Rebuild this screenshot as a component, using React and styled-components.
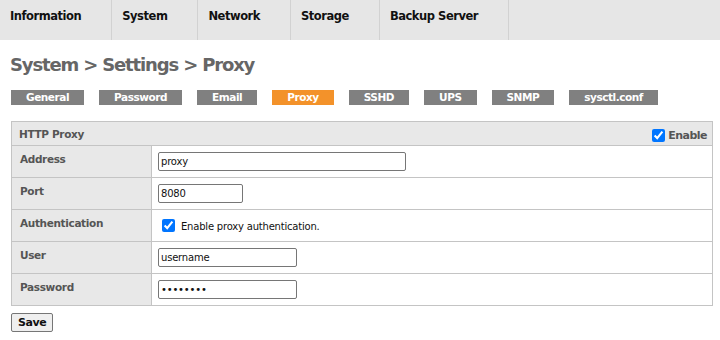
import React from 'react';
import styled, { createGlobalStyle } from 'styled-components';

const GlobalStyle = createGlobalStyle`
    body {
        margin: 0;
        background: #fff;
        font-family: "DejaVu Sans", Verdana, sans-serif;
        font-size: 12px;
    }
`;

const NavBar = styled.div`
    display: flex;
    height: 40px;
    background: #e6e6e6;
`;

const NavItem = styled.div`
    padding: 9px 30px 0 10px;
    border-right: 1px solid #d2d2d2;
    font-weight: bold;
    font-size: 11.5px;
    letter-spacing: -0.46px;
    color: #111;
`;

const Content = styled.div`
    padding: 0 7px 0 11px;
`;

const Title = styled.h1`
    margin: 14px 0 15px -1px;
    font-size: 18px;
    letter-spacing: -1.15px;
    color: #666;
    font-weight: bold;
`;

const TabRow = styled.div`
    display: flex;
    gap: 15px;
    margin-bottom: 16px;
`;

const Tab = styled.div`
    height: 15px;
    line-height: 15px;
    padding: 0 15px;
    background: ${p => (p.active ? '#f3922a' : '#808080')};
    color: #fff;
    font-weight: bold;
    font-size: 10.5px;
    letter-spacing: -0.45px;
`;

const Panel = styled.div`
    display: grid;
    grid-template-columns: 140px 1fr;
    border: 1px solid #c4c4c4;
    border-bottom: none;
`;

const PanelHead = styled.div`
    grid-column: 1 / -1;
    display: flex;
    justify-content: space-between;
    align-items: center;
    height: 23px;
    padding: 0 5px 0 7px;
    background: #e8e8e8;
    border-bottom: 1px solid #c4c4c4;
    font-weight: bold;
    font-size: 10.5px;
    letter-spacing: -0.35px;
    color: #555;
`;

const EnableLabel = styled.label`
    display: flex;
    align-items: center;
    gap: 3px;
    font-size: 11px;
    letter-spacing: -0.5px;
    padding-top: 3px;
`;

const Label = styled.div`
    height: 32px;
    padding: 7px 0 0 8px;
    box-sizing: border-box;
    background: #e8e8e8;
    border-right: 1px solid #c4c4c4;
    border-bottom: 1px solid #c4c4c4;
    font-weight: bold;
    font-size: 10.5px;
    letter-spacing: -0.35px;
    color: #555;
`;

const Value = styled.div`
    height: 32px;
    padding: ${p => (p.check ? '9px 0 0 10px' : '6px 0 0 6px')};
    box-sizing: border-box;
    border-bottom: 1px solid #c4c4c4;
    display: flex;
    align-items: flex-start;
    gap: 6px;
    font-size: 10px;
    letter-spacing: -0.2px;
    color: #111;

    span {
        padding-top: 2px;
    }
`;

const Input = styled.input`
    width: ${p => p.w}px;
    height: 19px;
    box-sizing: border-box;
    margin: 0;
    padding: 1px 2px;
    border: 1px solid #767676;
    border-radius: 2px;
    font-family: "DejaVu Sans", Verdana, sans-serif;
    font-size: 10px;
    letter-spacing: -0.2px;
    color: #111;
`;

const Check = styled.input`
    width: 13px;
    height: 13px;
    margin: 0;
    accent-color: #0075ff;
`;

const SaveButton = styled.button`
    display: block;
    margin-top: 7px;
    height: 19px;
    padding: 0 6px;
    font-family: "DejaVu Sans", Verdana, sans-serif;
    font-weight: bold;
    font-size: 11px;
    letter-spacing: -0.4px;
    background: #efefef;
    border: 1px solid #767676;
    border-radius: 2px;
    color: #111;
`;

const navItems = ['Information', 'System', 'Network', 'Storage', 'Backup Server'];
const tabs = ['General', 'Password', 'Email', 'Proxy', 'SSHD', 'UPS', 'SNMP', 'sysctl.conf'];

export default function App() {
    return (
        <>
            <GlobalStyle />
            <NavBar>
                {navItems.map(n => <NavItem key={n}>{n}</NavItem>)}
            </NavBar>
            <Content>
                <Title>System &gt; Settings &gt; Proxy</Title>
                <TabRow>
                    {tabs.map(t => <Tab key={t} active={t === 'Proxy'}>{t}</Tab>)}
                </TabRow>
                <Panel>
                    <PanelHead>
                        <span>HTTP Proxy</span>
                        <EnableLabel><Check type="checkbox" defaultChecked />Enable</EnableLabel>
                    </PanelHead>
                    <Label>Address</Label>
                    <Value><Input w={248} defaultValue="proxy" /></Value>
                    <Label>Port</Label>
                    <Value><Input w={85} defaultValue="8080" /></Value>
                    <Label>Authentication</Label>
                    <Value check><Check type="checkbox" defaultChecked /><span>Enable proxy authentication.</span></Value>
                    <Label>User</Label>
                    <Value><Input w={139} defaultValue="username" /></Value>
                    <Label>Password</Label>
                    <Value><Input w={139} type="password" defaultValue="password" /></Value>
                </Panel>
                <SaveButton>Save</SaveButton>
            </Content>
        </>
    );
}
